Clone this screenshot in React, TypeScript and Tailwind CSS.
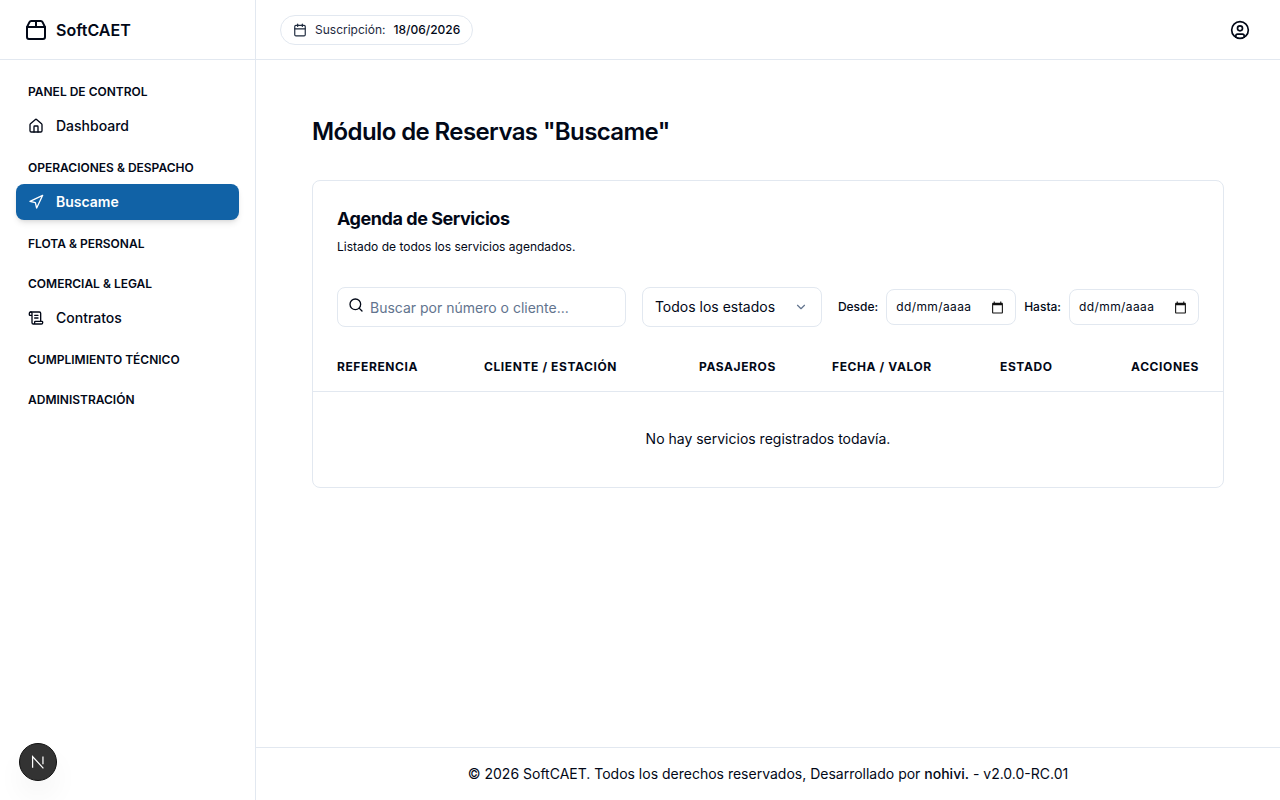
import { Calendar, ChevronDown, CircleUser, House, Navigation, Package2, ScrollText, Search } from 'lucide-react'
import type { LucideIcon } from 'lucide-react'

type NavSection = {
  title: string
  items: { label: string; icon: LucideIcon; active?: boolean }[]
}

const sections: NavSection[] = [
  { title: 'Panel de control', items: [{ label: 'Dashboard', icon: House }] },
  { title: 'Operaciones & despacho', items: [{ label: 'Buscame', icon: Navigation, active: true }] },
  { title: 'Flota & personal', items: [] },
  { title: 'Comercial & legal', items: [{ label: 'Contratos', icon: ScrollText }] },
  { title: 'Cumplimiento técnico', items: [] },
  { title: 'Administración', items: [] },
]

const columns = [
  { label: 'Referencia', className: 'w-[171px] pl-6 text-left' },
  { label: 'Cliente / Estación', className: 'w-[215px] text-left' },
  { label: 'Pasajeros', className: 'w-[133px] text-left' },
  { label: 'Fecha / Valor', className: 'w-[168px] text-left' },
  { label: 'Estado', className: 'w-[116px] text-left' },
  { label: 'Acciones', className: 'pr-6 text-right' },
]

function Sidebar() {
  return (
    <aside className="flex w-[256px] shrink-0 flex-col border-r border-slate-200 bg-white">
      <div className="flex h-[60px] items-center gap-2 border-b border-slate-200 px-6">
        <Package2 className="h-[24px] w-[24px]" strokeWidth={2} />
        <span className="text-base font-semibold">SoftCAET</span>
      </div>
      <nav className="flex flex-col gap-4 px-4 pt-6">
        {sections.map((section) => (
          <div key={section.title}>
            <h4 className="mb-2 px-3 text-xs leading-4 font-semibold uppercase">{section.title}</h4>
            {section.items.map(({ label, icon: Icon, active }) => (
              <a
                key={label}
                className={
                  active
                    ? 'flex h-9 items-center gap-3 rounded-lg bg-[#1162a6] px-3 text-sm font-semibold text-white shadow-md'
                    : 'flex h-9 items-center gap-3 rounded-lg px-3 text-sm font-medium'
                }
              >
                <Icon className="h-4 w-4" />
                {label}
              </a>
            ))}
          </div>
        ))}
      </nav>
    </aside>
  )
}

function DateField({ label }: { label: string }) {
  return (
    <div className="flex items-center gap-2">
      <span className="text-xs font-medium">{label}</span>
      <div className="flex h-9 w-[130px] items-center justify-between rounded-lg border border-slate-200 pr-[11px] pl-[9px] text-xs tracking-[0.4px]">
        dd/mm/aaaa
        <svg viewBox="0 0 24 24" className="h-[13px] w-[13px]" fill="#111">
          <path d="M20 3h-1V1h-2v2H7V1H5v2H4c-1.1 0-2 .9-2 2v16c0 1.1.9 2 2 2h16c1.1 0 2-.9 2-2V5c0-1.1-.9-2-2-2zm0 18H4V8h16v13z" />
        </svg>
      </div>
    </div>
  )
}

function ServicesCard() {
  return (
    <section className="rounded-lg border border-slate-200 bg-white">
      <div className="px-6 pt-6">
        <h2 className="text-lg leading-7 font-bold tracking-tight">Agenda de Servicios</h2>
        <p className="mt-1 text-xs leading-[20px]">Listado de todos los servicios agendados.</p>
        <div className="mt-[30px] flex items-center gap-4">
          <div className="flex h-10 flex-1 items-center gap-[6px] rounded-lg border border-slate-200 px-[10px]">
            <Search className="mb-[4px] h-4 w-4" />
            <span className="mt-[2px] text-sm text-slate-500">Buscar por número o cliente...</span>
          </div>
          <div className="flex h-10 w-[180px] items-center justify-between rounded-lg border border-slate-200 pr-[13px] pl-[12px]">
            <span className="text-sm">Todos los estados</span>
            <ChevronDown className="h-[14px] w-[14px] text-slate-500" />
          </div>
          <div className="flex items-center gap-2">
            <DateField label="Desde:" />
            <DateField label="Hasta:" />
          </div>
        </div>
      </div>
      <table className="mt-5 w-full table-fixed">
        <thead>
          <tr className="border-b border-slate-200">
            {columns.map((col) => (
              <th key={col.label} className={`h-11 pb-[3px] text-xs font-bold tracking-wider uppercase ${col.className}`}>
                {col.label}
              </th>
            ))}
          </tr>
        </thead>
        <tbody>
          <tr>
            <td colSpan={6} className="h-[96px] text-center text-sm">
              No hay servicios registrados todavía.
            </td>
          </tr>
        </tbody>
      </table>
    </section>
  )
}

export default function App() {
  return (
    <div className="relative flex h-[800px] w-full overflow-hidden bg-white font-['Inter',sans-serif] text-[#020817]">
      <Sidebar />
      <div className="flex min-w-0 flex-1 flex-col">
        <header className="flex h-[60px] shrink-0 items-center justify-between border-b border-slate-200 pr-[30px] pl-6">
          <div className="flex h-[30px] items-center gap-2 rounded-full border border-slate-200 px-3 text-xs">
            <Calendar className="h-[14px] w-[14px] text-slate-800" />
            <span className="text-slate-800">Suscripción:</span>
            <span className="font-medium">18/06/2026</span>
          </div>
          <CircleUser className="h-5 w-5" />
        </header>
        <main className="flex-1 px-14 pt-14">
          <h1 className="mb-8 text-2xl font-semibold tracking-tight">Módulo de Reservas "Buscame"</h1>
          <ServicesCard />
        </main>
        <footer className="flex h-[53px] shrink-0 items-center justify-center border-t border-slate-200 text-sm">
          <span>
            © 2026 SoftCAET. Todos los derechos reservados, Desarrollado por <span className="font-medium">nohivi.</span> - v2.0.0-RC.01
          </span>
        </footer>
      </div>
      <div className="absolute bottom-[19px] left-[19px] flex h-[38px] w-[38px] items-center justify-center rounded-full border border-[#111] bg-[#333] text-white shadow-[0_16px_32px_-8px_rgba(0,0,0,0.12)]">
        <svg viewBox="0 0 16 16" className="h-[18px] w-[18px]" fill="none" stroke="currentColor" strokeWidth={1.1}>
          <path d="M3.2 13V3.2L12.8 13.6M12.4 3v7" />
        </svg>
      </div>
    </div>
  )
}
